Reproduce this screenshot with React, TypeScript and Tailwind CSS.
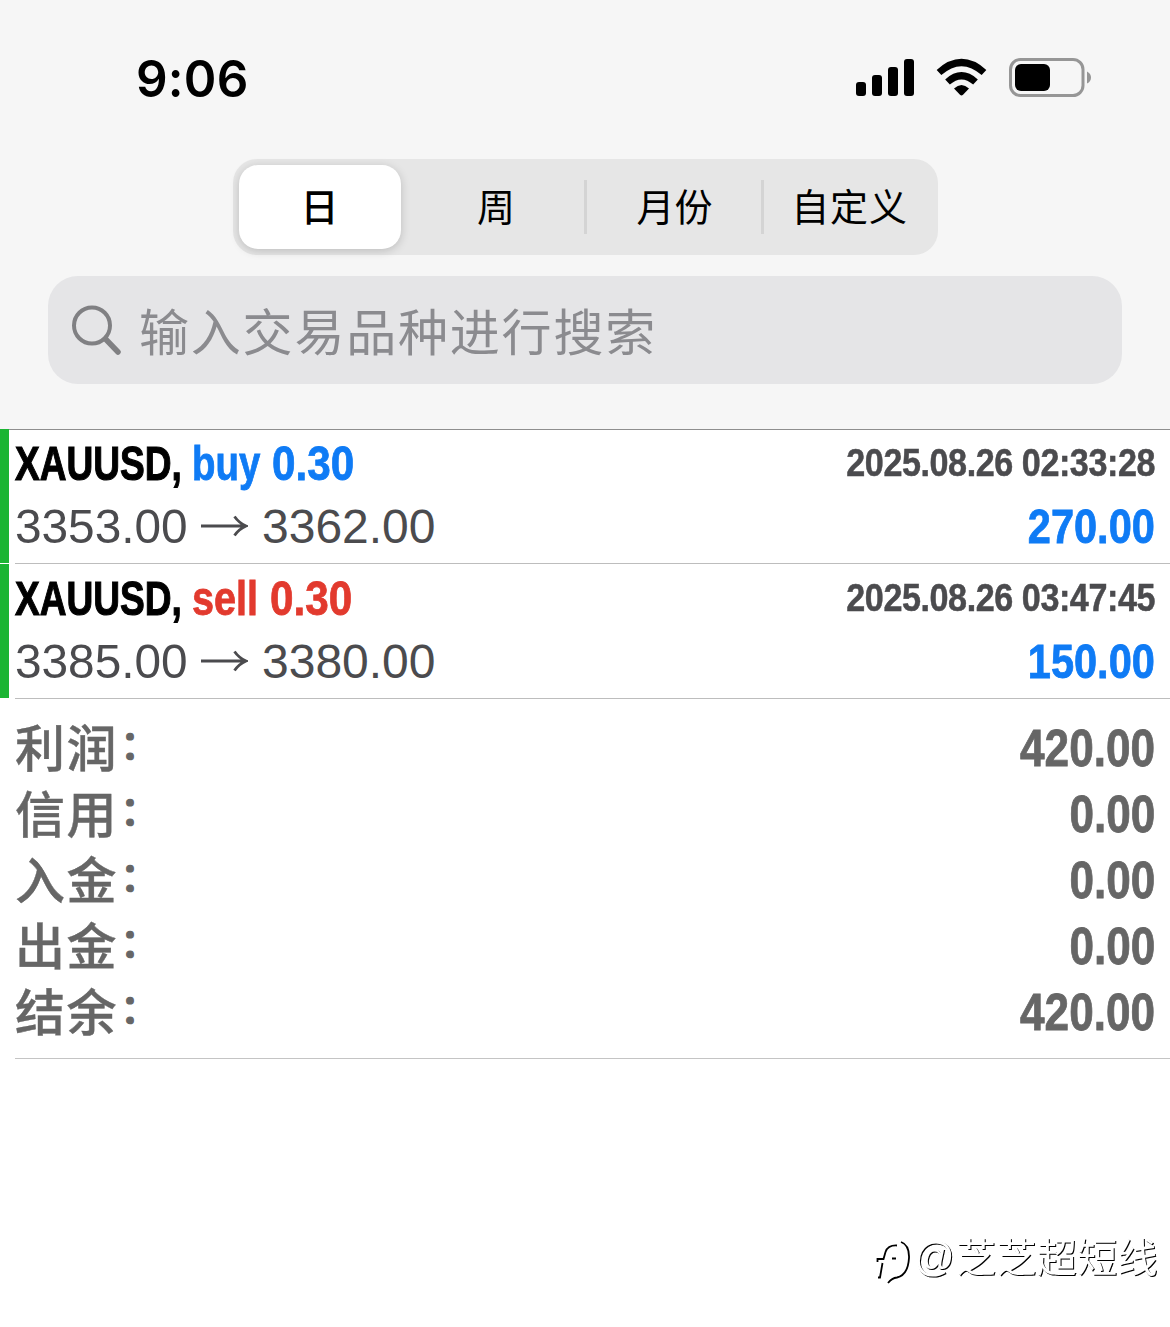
import React from "react";

const cjk = "font-['Noto_Sans_CJK_SC',sans-serif]";

function StatusBar() {
  return (
    <div className="flex h-[159px] items-start justify-between pl-[136px] pr-[79px] pt-[49px]">
      <span className="origin-left scale-x-[0.97] font-['Inter',sans-serif] text-[51px] leading-[60px] font-semibold tracking-[0.2px] text-black">
        9:06
      </span>
      <svg width="240" height="44" viewBox="851 55 240 44" className="mt-[6px]">
        <rect x="856" y="82" width="10" height="14" rx="3" />
        <rect x="872" y="75" width="10" height="21" rx="3" />
        <rect x="888" y="67" width="10" height="29" rx="3" />
        <rect x="904" y="59" width="10" height="37" rx="3" />
        <path d="M939 72.500 Q961.500 52.500 984 72.500" fill="none" stroke="#000" strokeWidth="7" />
        <path d="M947.500 82 Q961.500 69.500 975.500 82" fill="none" stroke="#000" strokeWidth="7" />
        <path d="M954 88.500 Q961.500 81.500 969 88.500 L963 94.800 Q961.500 96.300 960 94.800 Z" />
        <rect x="1010.500" y="59.500" width="72.500" height="36" rx="10" fill="none" stroke="#969696" strokeWidth="3" />
        <rect x="1015" y="64" width="35" height="27" rx="6" />
        <path d="M1087 71.500 Q1091 73.500 1091 77.500 Q1091 81.500 1087 83.500 Z" fill="#969696" />
      </svg>
    </div>
  );
}

function Tabs() {
  return (
    <div className={`${cjk} mx-auto flex h-[96px] w-[705px] items-center rounded-[24px] bg-[#e6e6e6] p-[6px] text-[38px] text-black`}>
      <div className="flex h-[84px] w-[162px] items-center justify-center rounded-[19px] bg-white pb-[5px] font-medium shadow-[0_2px_10px_rgba(0,0,0,0.18)]">
        <span>日</span>
      </div>
      <div className="flex w-[183px] items-center justify-center pb-[5px] pl-[8px]">周</div>
      <div className="h-[54px] w-[3px] bg-[#d4d4d4]" />
      <div className="flex w-[174px] items-center justify-center pb-[5px] pl-[2px]">月份</div>
      <div className="h-[54px] w-[3px] bg-[#d4d4d4]" />
      <div className="flex flex-1 items-center justify-center pb-[5px] pl-[4px] tracking-[0.8px]">自定义</div>
    </div>
  );
}

function Search() {
  return (
    <div className="mx-[48px] mt-[21px] flex h-[108px] items-center rounded-[30px] bg-[#e5e5e7] pl-[22px]">
      <svg width="54" height="54" viewBox="0 0 54 54" fill="none" stroke="#808083" strokeLinecap="round">
        <ellipse cx="22" cy="22.500" rx="18" ry="18" strokeWidth="4" />
        <path d="M36 36.500 L48 49" strokeWidth="5.500" />
      </svg>
      <span className={`${cjk} ml-[15px] pb-[3px] text-[50px] leading-[60px] tracking-[1.8px] text-[#8b8b8f]`}>
        输入交易品种进行搜索
      </span>
    </div>
  );
}

type Trade = {
  side: string;
  sideClass: string;
  lot: string;
  time: string;
  from: string;
  to: string;
  profit: string;
};

const trades: Trade[] = [
  { side: "buy", sideClass: "w-[80px] scale-x-[0.8] text-[#0f7bf5]", lot: "0.30", time: "2025.08.26 02:33:28", from: "3353.00", to: "3362.00", profit: "270.00" },
  { side: "sell", sideClass: "w-[78px] scale-x-[0.825] text-[#e23a2e]", lot: "0.30", time: "2025.08.26 03:47:45", from: "3385.00", to: "3380.00", profit: "150.00" },
];

function TradeRow({ t }: { t: Trade }) {
  const lotColor = t.side === "sell" ? "text-[#e23a2e]" : "text-[#0f7bf5]";
  return (
    <div className="flex h-[135px] font-['Liberation_Sans',sans-serif]">
      <div className="mr-[6px] h-[134px] w-[9px] bg-[#1bb533]" />
      <div className="flex-1 border-b border-[#bdbdbd] pr-[15px] pt-[5px]">
        <div className="flex h-[60px] items-center text-[48px] leading-[60px] font-bold whitespace-nowrap">
          <span className="w-[177px] origin-left scale-x-[0.772] text-black [-webkit-text-stroke:1.1px_currentColor]">XAUUSD,</span>
          <span className={`${t.sideClass} origin-left [-webkit-text-stroke:0.8px_currentColor]`}>{t.side}</span>
          <span className={`${lotColor} origin-left scale-x-[0.88] [-webkit-text-stroke:0.8px_currentColor]`}>{t.lot}</span>
          <span className="ml-auto origin-right scale-x-[0.887] pb-[2px] text-[38.500px] tracking-[-0.5px] text-[#4b4b4e] [-webkit-text-stroke:0.5px_currentColor]">{t.time}</span>
        </div>
        <div className="mt-[2px] flex h-[62px] items-center text-[48px] leading-[62px] text-[#4b4b4e]">
          <span className="w-[173px] origin-left scale-x-[0.995]">{t.from}</span>
          <svg width="47" height="24" viewBox="0 0 47 24" fill="none" stroke="#4b4b4e" strokeWidth="2.800" className="ml-[13px] mr-[14px] mb-[2px]">
            <path d="M0 12 H45 M33.500 2.500 Q38 9 45 12 Q38 15 33.500 21.500" />
          </svg>
          <span>{t.to}</span>
          <span className="ml-auto origin-right scale-x-[0.865] font-bold text-[#0f7bf5] [-webkit-text-stroke:0.8px_currentColor]">{t.profit}</span>
        </div>
      </div>
    </div>
  );
}

const totals = [
  ["利润", "420.00"],
  ["信用", "0.00"],
  ["入金", "0.00"],
  ["出金", "0.00"],
  ["结余", "420.00"],
];

function Summary() {
  return (
    <div className="ml-[15px] h-[360px] border-b border-[#c4c4c4] pr-[15px] pt-[17px] text-[#666]">
      {totals.map(([label, value]) => (
        <div key={label} className="flex h-[66px] items-center justify-between">
          <div className={`${cjk} flex items-center pb-[8px] leading-[66px] font-medium`}>
            <span className="text-[50px] tracking-[1.500px] [-webkit-text-stroke:0.4px_currentColor]">{label}</span>
            <span className="ml-[2px] pb-[6px] text-[40px] [-webkit-text-stroke:1.2px_currentColor]">：</span>
          </div>
          <span className="origin-right scale-x-[0.865] font-['Liberation_Sans',sans-serif] text-[51px] font-bold [-webkit-text-stroke:0.8px_currentColor]">
            {value}
          </span>
        </div>
      ))}
    </div>
  );
}

function Watermark() {
  return (
    <div className="absolute right-[12px] bottom-[34px] flex items-center">
      <svg width="40" height="50" viewBox="874 1242 40 50" fill="none" stroke="#000" strokeWidth="1.800" className="mt-[8px]">
        <path d="M901 1246 Q909.500 1249 909 1262 Q908 1279 897 1281.500 Q892 1282 888 1287" />
        <path d="M897 1249.500 Q888 1249 885.500 1256 L883.500 1263 H877.500 V1266 M882.500 1267 L880 1281.500 H878 M892 1262.500 H896" />
      </svg>
      <div className="flex items-center pb-[8px] text-white [filter:drop-shadow(1.500px_1.500px_0_#000)]">
        <span className="w-[42px] pt-[4px] font-['Liberation_Sans',sans-serif] text-[40px] leading-[56px]">@</span>
        <span className={`${cjk} text-[40px] leading-[56px] tracking-[0.4px]`}>芝芝超短线</span>
      </div>
    </div>
  );
}

export default function App() {
  return (
    <div className="relative h-[1327px] w-[1170px] overflow-hidden bg-white">
      <div className="h-[430px] border-b border-[#8e8e8e] bg-[#f6f6f6]">
        <StatusBar />
        <Tabs />
        <Search />
      </div>
      <div className="-mt-px">
        {trades.map((t) => (
          <TradeRow key={t.side} t={t} />
        ))}
      </div>
      <Summary />
      <Watermark />
    </div>
  );
}
